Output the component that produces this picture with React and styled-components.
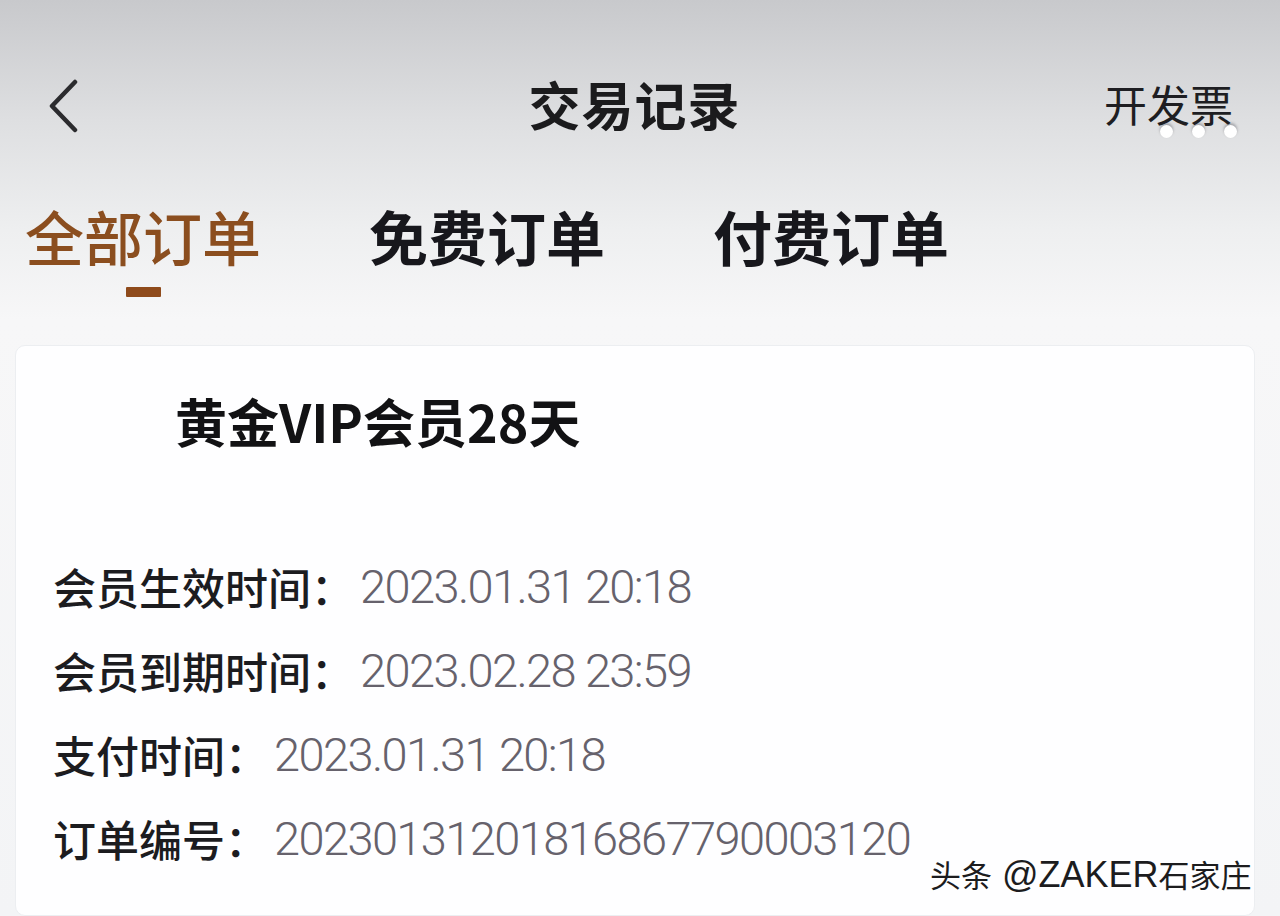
import React from 'react'
import styled, { createGlobalStyle } from 'styled-components'

const GlobalStyle = createGlobalStyle`
  html, body {
    margin: 0;
    padding: 0;
  }
  body {
    font-family: "Noto Sans CJK SC", "Noto Sans", sans-serif;
    overflow: hidden;
  }
`

const Page = styled.div`
  position: relative;
  width: 1280px;
  height: 916px;
  overflow: hidden;
  display: flex;
  flex-direction: column;
  background: linear-gradient(
    180deg,
    #c8c9cc 0px,
    #dedfe1 120px,
    #eeeff0 230px,
    #f7f7f8 320px,
    #f3f4f6 100%
  );
`

const NavBar = styled.header`
  display: grid;
  grid-template-columns: 1fr auto 1fr;
  align-items: center;
  height: 80px;
  margin-top: 64px;
  padding: 0 47px 0 44px;
`

const BackButton = styled.button`
  justify-self: start;
  display: flex;
  align-items: center;
  margin-top: 6px;
  padding: 0;
  border: 0;
  background: none;
  cursor: pointer;
`

const NavTitle = styled.h1`
  margin: 0 0 0 -8px;
  font-size: 52px;
  line-height: 1;
  font-weight: 700;
  color: #1b1b1d;
  letter-spacing: 1px;
`

const NavAction = styled.div`
  position: relative;
  justify-self: end;
  margin-top: -2px;
  font-size: 43px;
  line-height: 1;
  font-weight: 400;
  color: #1e1e22;
`

const Dots = styled.div`
  position: absolute;
  left: 56px;
  top: 43px;
  display: flex;
  gap: 19px;
`

const Dot = styled.span`
  width: 13px;
  height: 13px;
  border-radius: 50%;
  background: #ffffff;
  box-shadow: 0 -2px 3px rgba(60, 60, 70, 0.4);
`

const Tabs = styled.nav`
  display: flex;
  gap: 108px;
  margin-top: 62px;
  padding-left: 25px;
`

const Tab = styled.div`
  display: flex;
  flex-direction: column;
  align-items: center;
  gap: 22px;
  font-size: 59px;
  line-height: 1;
  font-weight: ${p => (p.active ? 500 : 700)};
  color: ${p => (p.active ? '#8b4e1f' : '#17171c')};
`

const Indicator = styled.span`
  width: 35px;
  height: 10px;
  border-radius: 1px;
  background: ${p => (p.visible ? '#8f4b1c' : 'transparent')};
`

const Card = styled.section`
  flex: 1;
  margin: 48px 25px 0 15px;
  padding: 49px 0 0 37px;
  background: #fefeff;
  border: 1px solid #eceef1;
  border-radius: 10px;
`

const ProductName = styled.h2`
  margin: 0 0 97px 122px;
  font-size: 52px;
  line-height: 1;
  font-weight: 700;
  color: #121214;
  letter-spacing: 0;
`

const InfoRow = styled.div`
  display: flex;
  align-items: center;
  height: 84px;
`

const Label = styled.span`
  font-size: 43px;
  font-weight: 500;
  color: #1c1c1f;
`

const Value = styled.span`
  margin-left: 6px;
  font-family: Roboto, "Liberation Sans", sans-serif;
  font-weight: 300;
  font-size: 47px;
  letter-spacing: -1.6px;
  color: #66626c;
`

const Watermark = styled.div`
  position: absolute;
  left: 930px;
  top: 853px;
  font-size: 31px;
  line-height: 1.2;
  color: #1c1c1e;
  text-shadow: 1px 1px 0 #ffffff, -1px 0 0 #ffffff;
  white-space: nowrap;
`

const WatermarkLatin = styled.span`
  font-family: "Liberation Sans", sans-serif;
  font-size: 36px;
  margin-left: 10px;
`

const BackIcon = () => (
  <svg width="40" height="56" viewBox="0 0 40 56" fill="none">
    <polyline
      points="31,3 8,27 31,51"
      stroke="#2b2b2e"
      strokeWidth="4.5"
      strokeLinecap="round"
      strokeLinejoin="round"
    />
  </svg>
)

const tabs = ['全部订单', '免费订单', '付费订单']

const rows = [
  ['会员生效时间：', '2023.01.31 20:18'],
  ['会员到期时间：', '2023.02.28 23:59'],
  ['支付时间：', '2023.01.31 20:18'],
  ['订单编号：', '20230131201816867790003120'],
]

export default function App() {
  return (
    <Page>
      <GlobalStyle />
      <NavBar>
        <BackButton aria-label="返回">
          <BackIcon />
        </BackButton>
        <NavTitle>交易记录</NavTitle>
        <NavAction>
          开发票
          <Dots>
            <Dot />
            <Dot />
            <Dot />
          </Dots>
        </NavAction>
      </NavBar>
      <Tabs>
        {tabs.map((t, i) => (
          <Tab key={t} active={i === 0}>
            {t}
            <Indicator visible={i === 0} />
          </Tab>
        ))}
      </Tabs>
      <Card>
        <ProductName>黄金VIP会员28天</ProductName>
        {rows.map(([label, value]) => (
          <InfoRow key={label}>
            <Label>{label}</Label>
            <Value>{value}</Value>
          </InfoRow>
        ))}
      </Card>
      <Watermark>
        头条<WatermarkLatin>@ZAKER</WatermarkLatin>石家庄
      </Watermark>
    </Page>
  )
}
